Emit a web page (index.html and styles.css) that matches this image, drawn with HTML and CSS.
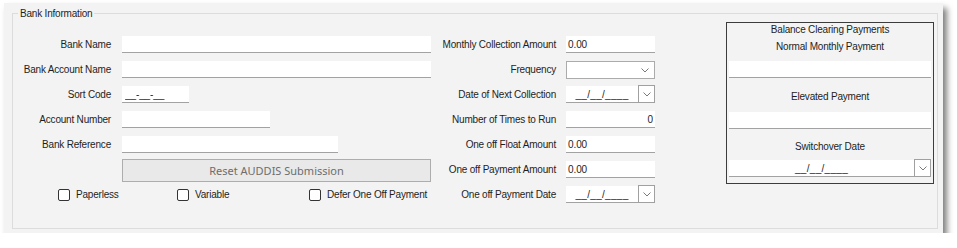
FILE: index.html
```html
<!DOCTYPE html>
<html lang="en">
<head>
  <meta charset="UTF-8" />
  <title>Bank Information</title>
  <link rel="stylesheet" href="styles.css">
</head>
<body>

  <div class="window">
    <fieldset class="group">
      <legend>Bank Information</legend>
      <div class="group-body">

        <!-- Bank details -->
        <div class="bank-col">
          <div class="bank-grid">
            <label>Bank Name</label>
            <input class="field w-full" type="text" value="">
            <label>Bank Account Name</label>
            <input class="field w-full" type="text" value="">
            <label>Sort Code</label>
            <input class="field w-sort" type="text" value="__-__-__">
            <label>Account Number</label>
            <input class="field w-acc" type="text" value="">
            <label>Bank Reference</label>
            <input class="field w-ref" type="text" value="">
            <button class="reset-btn" disabled>Reset AUDDIS Submission</button>
          </div>
          <div class="checks">
            <label class="check"><span class="box"></span>Paperless</label>
            <label class="check"><span class="box"></span>Variable</label>
            <label class="check"><span class="box"></span>Defer One Off Payment</label>
          </div>
        </div>

        <!-- Collection details -->
        <div class="collect-grid">
          <label>Monthly Collection Amount</label>
          <input class="field" type="text" value="0.00">
          <label>Frequency</label>
          <div class="combo">
            <svg class="chev" width="8" height="5" viewBox="0 0 8 5"><polyline points="0.5,0.5 4,4 7.5,0.5" fill="none" stroke="#7a7a7a" stroke-width="1"/></svg>
          </div>
          <label>Date of Next Collection</label>
          <div class="date">
            <input class="field date-text" type="text" value="__/__/____">
            <span class="drop"><svg width="8" height="5" viewBox="0 0 8 5"><polyline points="0.5,0.5 4,4 7.5,0.5" fill="none" stroke="#7a7a7a" stroke-width="1"/></svg></span>
          </div>
          <label>Number of Times to Run</label>
          <input class="field num" type="text" value="0">
          <label>One off Float Amount</label>
          <input class="field" type="text" value="0.00">
          <label>One off Payment Amount</label>
          <input class="field" type="text" value="0.00">
          <label>One off Payment Date</label>
          <div class="date">
            <input class="field date-text" type="text" value="__/__/____">
            <span class="drop"><svg width="8" height="5" viewBox="0 0 8 5"><polyline points="0.5,0.5 4,4 7.5,0.5" fill="none" stroke="#7a7a7a" stroke-width="1"/></svg></span>
          </div>
        </div>

        <!-- Balance clearing -->
        <div class="balance-box">
          <div class="bal-title">Balance Clearing Payments</div>
          <div class="bal-label first">Normal Monthly Payment</div>
          <input class="field bal-field" type="text" value="">
          <div class="bal-label">Elevated Payment</div>
          <input class="field bal-field second" type="text" value="">
          <div class="bal-label third">Switchover Date</div>
          <div class="date bal-date">
            <input class="field date-text" type="text" value="__/__/____">
            <span class="drop"><svg width="8" height="5" viewBox="0 0 8 5"><polyline points="0.5,0.5 4,4 7.5,0.5" fill="none" stroke="#7a7a7a" stroke-width="1"/></svg></span>
          </div>
        </div>

      </div>
    </fieldset>
  </div>

</body>
</html>
```

FILE: styles.css
```css
body {
  margin: 0;
  padding-top: 3px;
  background: #ffffff;
  font-family: 'Liberation Sans', Arial, sans-serif;
  font-size: 10px;
  letter-spacing: -0.2px;
  color: #1e1e1e;
}

/* Window panel with drop shadow */
.window {
  margin-left: 4px;
  width: 939px;
  height: 230px;
  box-sizing: border-box;
  padding: 4px 0 0 8px;
  background: #f3f3f3;
  box-shadow: 4px 5px 6px rgba(0, 0, 0, 0.5);
}

.group {
  margin: 0;
  padding: 0;
  width: 926px;
  box-sizing: border-box;
  border: 1px solid #dcdcdc;
}

.group legend {
  margin-left: 5px;
  padding: 0 2px;
  line-height: 13px;
  font-size: 10px;
}

.group-body {
  display: flex;
  align-items: flex-start;
  height: 208px;
}

label {
  line-height: 17px;
  text-align: right;
  white-space: nowrap;
}

.field {
  box-sizing: border-box;
  height: 17px;
  margin: 0;
  padding: 0 2px;
  border: none;
  border-bottom: 1px solid #a2a2a2;
  background: #ffffff;
  font-family: 'Liberation Sans', Arial, sans-serif;
  font-size: 10px;
  letter-spacing: -0.1px;
  color: #1e1e1e;
  outline: none;
}

/* Left column */
.bank-col {
  width: 418px;
  padding-top: 16px;
}

.bank-grid {
  display: grid;
  grid-template-columns: 98px 309px;
  grid-auto-rows: 17px;
  column-gap: 11px;
  row-gap: 8px;
}

.w-full { width: 309px; }
.w-sort { width: 67px; padding-left: 3px; }
.w-acc { width: 148px; }
.w-ref { width: 216px; }

.reset-btn {
  grid-column: 2;
  height: 23px;
  margin-top: -2px;
  border: 1px solid #adadad;
  background: #e9e9e9;
  font-family: 'Noto Sans', 'Open Sans', sans-serif;
  font-size: 11px;
  letter-spacing: 0;
  color: #6d6d6d;
  padding: 0;
}

.checks {
  display: grid;
  grid-template-columns: 119px 132px auto;
  padding-left: 45px;
  margin-top: 11px;
}

.check {
  display: flex;
  align-items: center;
  gap: 6px;
  line-height: 12px;
  text-align: left;
}

.box {
  width: 12px;
  height: 12px;
  box-sizing: border-box;
  border: 1px solid #333333;
  border-radius: 2px;
  background: #ffffff;
}

/* Middle column */
.collect-grid {
  display: grid;
  grid-template-columns: 125px 89px;
  grid-auto-rows: 17px;
  column-gap: 10px;
  row-gap: 8px;
  padding-top: 16px;
}

.collect-grid .field { width: 89px; }

.num { text-align: right; }

.combo {
  box-sizing: border-box;
  height: 18px;
  border: 1px solid #ababab;
  background: #ffffff;
  display: flex;
  align-items: center;
  justify-content: flex-end;
  padding-right: 5px;
}

.date {
  display: flex;
  align-items: flex-end;
}

.collect-grid .date .date-text { width: 72px; }

.date-text {
  text-align: center;
  letter-spacing: 0.3px;
}

.drop {
  box-sizing: border-box;
  width: 17px;
  height: 18px;
  margin-top: -1px;
  border: 1px solid #a0a0a0;
  background: #ffffff;
  display: flex;
  align-items: center;
  justify-content: center;
  align-self: flex-end;
}

/* Right box */
.balance-box {
  box-sizing: border-box;
  width: 208px;
  height: 162px;
  margin: 2px 0 0 71px;
  padding: 0 2px;
  border: 1px solid #3c3c3c;
  display: flex;
  flex-direction: column;
  text-align: center;
}

.bal-title,
.bal-label {
  line-height: 13px;
}

.bal-label { margin-top: 12px; }
.bal-label.first { margin-top: 4px; }
.bal-label.third { margin-top: 11px; }

.bal-field {
  width: 100%;
  margin-top: 8px;
}

.bal-field.second { margin-top: 9px; }

.bal-date {
  margin-top: 7px;
}

.bal-date .date-text { flex: 1; }
```
